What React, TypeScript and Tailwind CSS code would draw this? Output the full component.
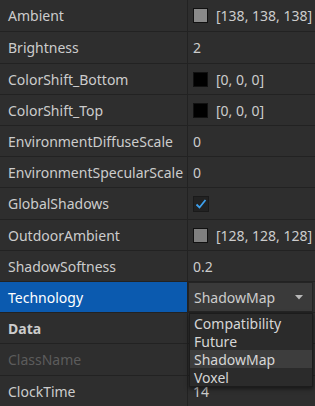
type Row = {
  label: string;
  h: string;
  kind?: 'color' | 'text' | 'check' | 'select' | 'header' | 'disabled';
  value?: string;
  swatch?: string;
};

const rows: Row[] = [
  { label: 'Ambient', h: 'h-[32px]', kind: 'color', value: '[138, 138, 138]', swatch: 'bg-[#8a8a8a]' },
  { label: 'Brightness', h: 'h-[32px]', kind: 'text', value: '2' },
  { label: 'ColorShift_Bottom', h: 'h-[31px]', kind: 'color', value: '[0, 0, 0]', swatch: 'bg-black' },
  { label: 'ColorShift_Top', h: 'h-[31px]', kind: 'color', value: '[0, 0, 0]', swatch: 'bg-black' },
  { label: 'EnvironmentDiffuseScale', h: 'h-[31px]', kind: 'text', value: '0' },
  { label: 'EnvironmentSpecularScale', h: 'h-[31px]', kind: 'text', value: '0' },
  { label: 'GlobalShadows', h: 'h-[32px]', kind: 'check' },
  { label: 'OutdoorAmbient', h: 'h-[31px]', kind: 'color', value: '[128, 128, 128]', swatch: 'bg-[#808080]' },
  { label: 'ShadowSoftness', h: 'h-[31px]', kind: 'text', value: '0.2' },
  { label: 'Technology', h: 'h-[31px]', kind: 'select', value: 'ShadowMap' },
  { label: 'Data', h: 'h-[31px]', kind: 'header' },
  { label: 'ClassName', h: 'h-[32px]', kind: 'disabled' },
  { label: 'ClockTime', h: 'h-[31px]', kind: 'text', value: '14' },
];

const options = ['Compatibility', 'Future', 'ShadowMap', 'Voxel'];

function Value({ row }: { row: Row }) {
  if (row.kind === 'color') {
    return (
      <div className="flex items-center gap-2 pl-[5px]">
        <div className={`w-[15px] h-[15px] border border-[#111] ${row.swatch}`} />
        <span>{row.value}</span>
      </div>
    );
  }
  if (row.kind === 'check') {
    return (
      <div className="pl-[5px]">
        <div className="w-[16px] h-[16px] bg-[#222] border border-[#1a1a1a] flex items-center justify-center">
          <svg width="12" height="12" viewBox="0 0 12 12">
            <path d="M1.5 6.5 L4.5 9.5 L10.5 2" fill="none" stroke="#3ea1ee" strokeWidth="1.8" />
          </svg>
        </div>
      </div>
    );
  }
  if (row.kind === 'select') {
    return (
      <div className="h-full w-full flex items-center justify-between pl-[5px] pr-[9px] bg-[#3a3a3a] border border-[#242424]">
        <span>{row.value}</span>
        <svg width="8" height="5" viewBox="0 0 8 5">
          <path d="M0 0 L8 0 L4 4.5 Z" fill="#b8b8b8" />
        </svg>
      </div>
    );
  }
  if (row.kind === 'header' || row.kind === 'disabled') return null;
  return <span className="pl-[5px]">{row.value}</span>;
}

export default function App() {
  return (
    <div
      className="relative w-[315px] h-[406px] overflow-hidden bg-[#2e2e2e] text-[14px] text-[#cccccc]"
      style={{ fontFamily: '"Noto Sans", "Open Sans", sans-serif' }}
    >
      {rows.map((row) => {
        const selected = row.kind === 'select';
        return (
          <div key={row.label} className={`flex ${row.h} border-b border-[#222222]`}>
            <div
              className={`w-[188px] shrink-0 flex items-center pl-[8px] border-r border-[#222222] ${
                selected ? 'bg-[#0b5aaf] text-white' : ''
              } ${row.kind === 'header' ? 'font-bold' : ''} ${row.kind === 'disabled' ? 'text-[#5c5c5c]' : ''}`}
            >
              {row.label}
            </div>
            <div className="flex-1 flex items-center pr-[2px]">
              <Value row={row} />
            </div>
          </div>
        );
      })}
      {/* open dropdown for Technology */}
      <div className="absolute left-[189px] top-[313px] w-[124px] bg-[#2b2b2b] border border-[#1c1c1c] shadow-[0_2px_4px_rgba(0,0,0,0.5)] text-[#d6d6d6]">
        {options.map((o) => (
          <div
            key={o}
            className={`h-[18px] flex items-center pl-[4px] ${o === 'ShadowMap' ? 'bg-[#3d3d3d]' : ''}`}
          >
            {o}
          </div>
        ))}
      </div>
    </div>
  );
}
